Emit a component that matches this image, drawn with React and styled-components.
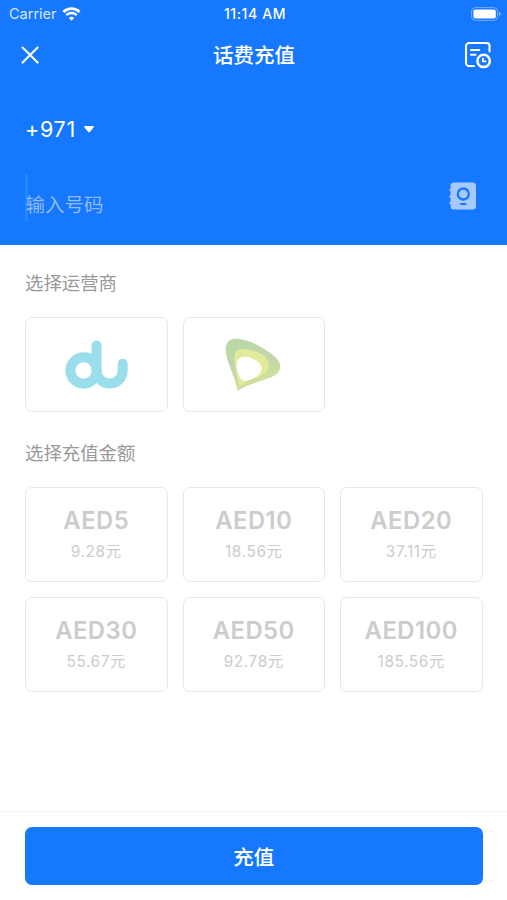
import React, { useState } from "react";
import styled, { createGlobalStyle } from "styled-components";

const amounts = [
  { face: "AED5", price: "9.28元" },
  { face: "AED10", price: "18.56元" },
  { face: "AED20", price: "37.11元" },
  { face: "AED30", price: "55.67元" },
  { face: "AED50", price: "92.78元" },
  { face: "AED100", price: "185.56元" }
];

const WifiIcon = () => (
  <svg width="19" height="14" viewBox="0 0 18 14" fill="none" stroke="#fff">
    <path d="M0.9 5a11.6 11.6 0 0 1 16.2 0" strokeWidth="2.7" />
    <path d="M3.8 8.2a7.4 7.4 0 0 1 10.4 0" strokeWidth="2.4" />
    <path d="M9 13.8l-2.6-2.9a3.8 3.8 0 0 1 5.2 0z" fill="#fff" stroke="none" />
  </svg>
);

const BatteryIcon = () => (
  <svg width="30" height="14" viewBox="0 0 30 14">
    <rect x="0.6" y="0.6" width="26" height="12.8" rx="3.8" fill="none" stroke="#fff" strokeOpacity="0.4" />
    <rect x="2.4" y="2.4" width="22.4" height="9.2" rx="2" fill="#fff" />
    <path d="M27.8 4.8q2 .6 2 2.2t-2 2.2z" fill="#fff" fillOpacity="0.45" />
  </svg>
);

const CloseIcon = () => (
  <svg width="18" height="18" viewBox="0 0 18 18" stroke="#fff" strokeWidth="2.1" strokeLinecap="round">
    <path d="M1.6 1.6l15 15M16.6 1.6l-15 15" />
  </svg>
);

const RecordIcon = () => (
  <svg width="28" height="28" viewBox="0 0 28 28" fill="none" stroke="#fff" strokeWidth="2.1" strokeLinecap="round" strokeLinejoin="round">
    <path d="M10 25H5a3 3 0 0 1-3-3V5a3 3 0 0 1 3-3h17.5a3 3 0 0 1 3 3v5.5" />
    <path d="M7 9h8.2M7 13.8h4.4" />
    <circle cx="19.6" cy="19.9" r="6.2" strokeWidth="2.5" />
    <path d="M18.9 17.4v3h2.6" strokeWidth="1.7" />
  </svg>
);

const ContactsIcon = () => (
  <svg width="28" height="28" viewBox="0 0 28 28">
    <path
      fill="#a6caff"
      d="M5 .5h18.500a3.500 3.500 0 0 1 3.500 3.500v20a3.500 3.500 0 0 1-3.500 3.500H5A3.500 3.500 0 0 1 1.500 24v-2.300H.3v-1.700h1.200v-4.600H.3v-1.700h1.200v-5H.3V7h1.200V4A3.500 3.500 0 0 1 5 .5z"
    />
    <circle cx="14.3" cy="12" r="5.5" fill="none" stroke="#1677ff" strokeWidth="2.3" />
    <path d="M11.3 22h6" stroke="#1677ff" strokeWidth="2" />
  </svg>
);

const DuLogo = () => (
  <svg width="63" height="50" viewBox="65 340 63 50" fill="none" stroke="#99deea" strokeWidth="10" strokeLinecap="round">
    <circle cx="83.6" cy="370.5" r="13.2" />
    <path d="M96.5 345.6v24.9a13.1 13.1 0 0 0 26.2 0v-6.8" />
  </svg>
);

const EtisalatLogo = () => (
  <svg width="57" height="53" viewBox="31 25 171 159">
    <defs>
      <linearGradient id="leaf" x1="0" y1="0" x2="0.4" y2="1">
        <stop offset="0" stopColor="#b9d8a6" />
        <stop offset="0.6" stopColor="#c3d6aa" />
        <stop offset="1" stopColor="#d2e299" />
      </linearGradient>
    </defs>
    <path fill="url(#leaf)" d="M69 183C65 160 53 132 44 106C36 84 31 67 34 49C38 33 48 27 66 27C104 28 150 55 181 81C200 99 202 116 187 132C164 151 112 156 69 183z" />
    <path fill="#e2eb9b" d="M75 171C69 151 66 134 62 111C57 88 58 72 66 64C76 57 96 58 115 63C146 71 163 87 163 107C163 125 148 135 127 144C105 153 89 158 75 171z" />
    <path fill="#fff" d="M80 149C71 138 65 119 66 102C67 86 77 80 94 81C117 83 140 99 141 116C141 132 126 142 108 149C95 155 86 156 80 149z" />
  </svg>
);

const App = () => {
  const [phone, setPhone] = useState("");

  return (
    <Page>
      <GlobalStyle />
      <Top>
        <StatusBar>
          <Carrier>
            Carrier
            <WifiIcon />
          </Carrier>
          <Clock>11:14 AM</Clock>
          <BatteryIcon />
        </StatusBar>
        <NavBar>
          <IconButton aria-label="关闭">
            <CloseIcon />
          </IconButton>
          <h1>话费充值</h1>
          <IconButton aria-label="充值记录">
            <RecordIcon />
          </IconButton>
        </NavBar>
        <AreaCode>
          +971
          <Caret viewBox="0 0 10 7">
            <path d="M1 0h8q1.400.300.500 1.500L6 5.700q-1 1-2 0L.500 1.500Q-.400.300 1 0z" fill="#fff" />
          </Caret>
        </AreaCode>
        <PhoneRow>
          <Cursor />
          <PhoneInput
            value={phone}
            placeholder="输入号码"
            onChange={e => setPhone(e.target.value)}
          />
          <IconButton aria-label="通讯录">
            <ContactsIcon />
          </IconButton>
        </PhoneRow>
      </Top>
      <Content>
        <h2>选择运营商</h2>
        <CardGrid>
          <Card>
            <DuLogo />
          </Card>
          <Card>
            <EtisalatLogo />
          </Card>
        </CardGrid>
        <h2>选择充值金额</h2>
        <CardGrid>
          {amounts.map(({ face, price }) => (
            <Card key={face}>
              <Face>{face}</Face>
              <Price>{price}</Price>
            </Card>
          ))}
        </CardGrid>
      </Content>
      <Footer>
        <SubmitButton type="submit">充值</SubmitButton>
      </Footer>
    </Page>
  );
};

export default App;

const GlobalStyle = createGlobalStyle`
  * {
    box-sizing: border-box;
  }
  body {
    margin: 0;
    background: #fff;
    font-family: Inter, "Noto Sans CJK SC", sans-serif;
  }
  button,
  input {
    font-family: inherit;
  }
`;

const Page = styled.div`
  width: 507px;
  height: 900px;
  display: flex;
  flex-direction: column;
  overflow: hidden;
  background: #fff;
`;

const Top = styled.header`
  height: 245px;
  flex-shrink: 0;
  color: #fff;
  background: #1677ff;
`;

const StatusBar = styled.div`
  height: 27px;
  padding: 0 6px 0 9px;
  display: grid;
  grid-template-columns: 1fr auto 1fr;
  align-items: center;
  & > svg {
    justify-self: end;
  }
`;

const Carrier = styled.div`
  display: flex;
  align-items: center;
  gap: 5px;
  color: #d6e6ff;
  font-size: 14.5px;
`;

const Clock = styled.span`
  font-size: 14px;
  font-weight: 500;
  letter-spacing: 0.6px;
`;

const NavBar = styled.nav`
  height: 56px;
  padding: 0 15px 0 21px;
  display: flex;
  justify-content: space-between;
  align-items: center;
  & h1 {
    margin: 2px 0 0 5px;
    font-size: 20.5px;
    line-height: 30px;
    font-weight: 500;
  }
`;

const IconButton = styled.button`
  padding: 0;
  display: flex;
  border: none;
  background: none;
`;

const AreaCode = styled.div`
  height: 30px;
  margin: 31px 25px 0;
  display: flex;
  align-items: center;
  font-size: 21.5px;
  letter-spacing: 0.7px;
`;

const Caret = styled.svg`
  width: 10px;
  height: 7px;
  margin-left: 8px;
`;

const PhoneRow = styled.div`
  height: 50px;
  margin: 27px 30px 0 24.5px;
  display: flex;
  align-items: center;
`;

const Cursor = styled.span`
  width: 3px;
  height: 48px;
  margin: 3px -2px 0 0;
  border-radius: 1px;
  background: #2389ff;
`;

const PhoneInput = styled.input`
  flex: 1;
  min-width: 0;
  height: 30px;
  margin-top: 17px;
  padding: 0;
  border: none;
  outline: none;
  color: #fff;
  background: none;
  font-size: 19.5px;
  &::placeholder {
    color: #8fbcff;
    opacity: 1;
  }
`;

const Content = styled.main`
  flex: 1;
  padding: 25px 24.5px 0 25px;
  & h2 {
    height: 26px;
    margin: 0 0 21px;
    color: #999;
    font-size: 18.4px;
    line-height: 26px;
    font-weight: 400;
  }
  & h2:not(:first-child) {
    margin-top: 28px;
  }
`;

const CardGrid = styled.div`
  display: grid;
  grid-template-columns: repeat(3, 1fr);
  gap: 15px;
`;

const Card = styled.div`
  height: 95px;
  display: flex;
  flex-direction: column;
  justify-content: center;
  align-items: center;
  border: 1px solid #e8e8e8;
  border-radius: 7px;
`;

const Face = styled.span`
  color: #ccc;
  font-size: 23.8px;
  line-height: 32px;
  font-weight: 600;
  letter-spacing: 0.5px;
`;

const Price = styled.span`
  margin-top: 3px;
  color: #ccc;
  font-size: 15.4px;
  line-height: 24px;
  letter-spacing: 0.6px;
`;

const Footer = styled.footer`
  height: 89px;
  flex-shrink: 0;
  padding: 15px 24.5px 0 25px;
  border-top: 1px solid #f5f5f5;
`;

const SubmitButton = styled.button`
  width: 100%;
  height: 58px;
  border: none;
  border-radius: 7px;
  color: #fff;
  background: #1677ff;
  font-size: 20.5px;
  font-weight: 500;
`;
